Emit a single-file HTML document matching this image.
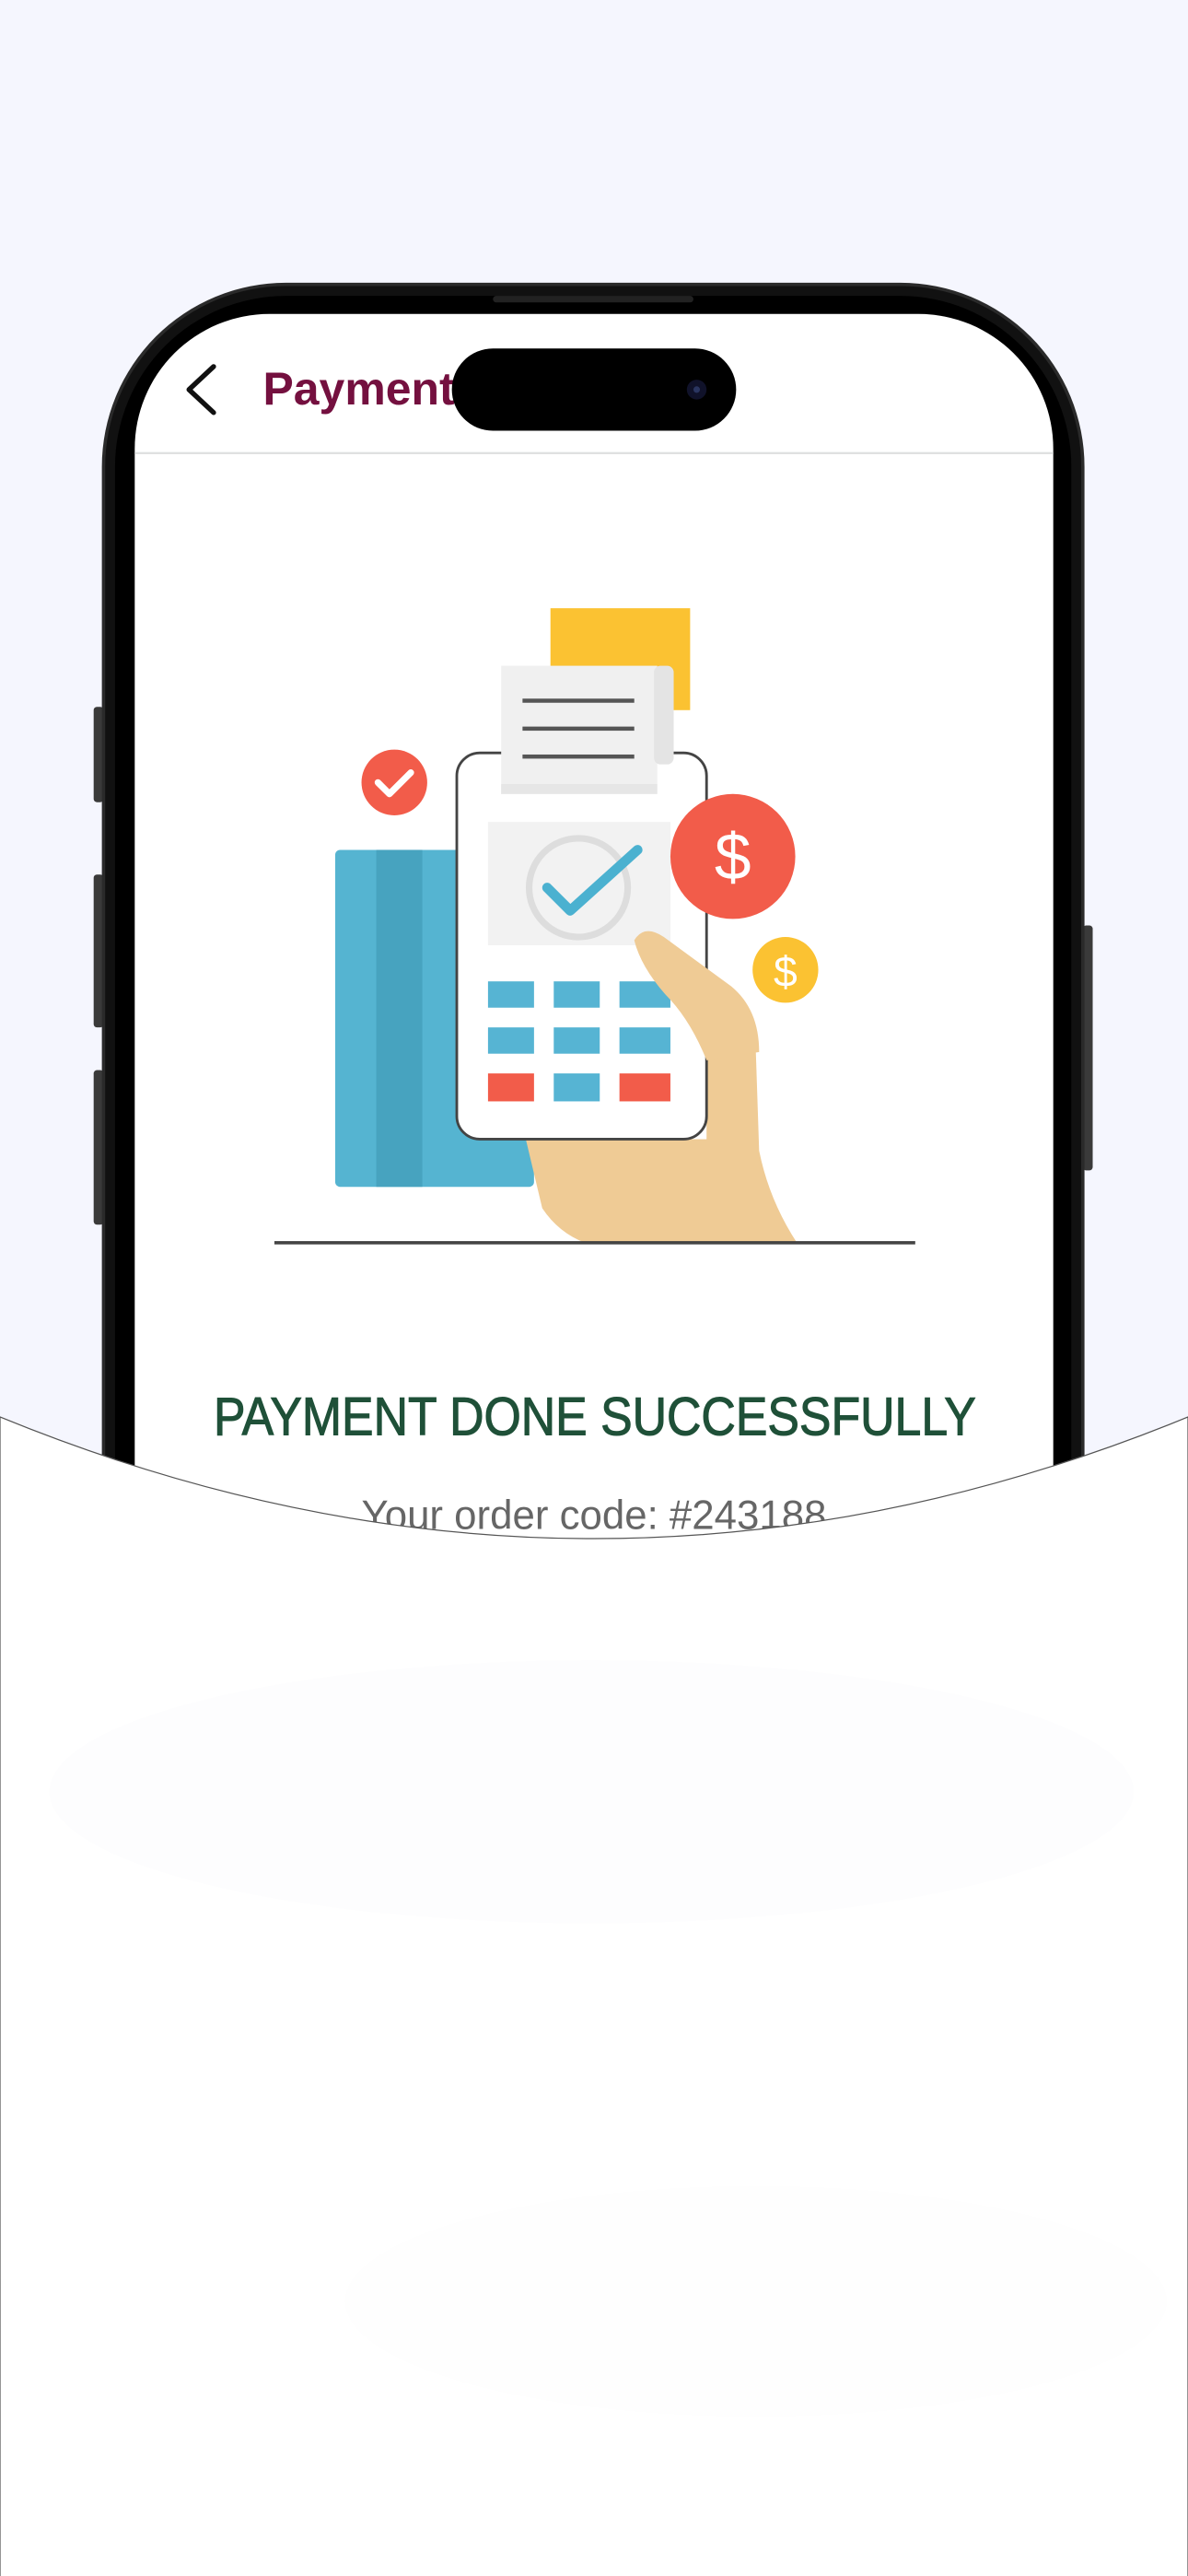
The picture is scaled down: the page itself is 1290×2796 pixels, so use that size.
<!DOCTYPE html>
<html><head><meta charset="utf-8"><style>
html,body{margin:0;padding:0;background:#f5f6fe;}
svg{display:block}
</style></head><body>
<svg width="1290" height="2796" viewBox="0 0 1290 2796" xmlns="http://www.w3.org/2000/svg">
<rect width="1290" height="2796" fill="#f5f6fe"/>
<g transform="scale(1.78423)">
  <rect x="57" y="430" width="6" height="58" rx="2" fill="#3a3a3a"/>
  <rect x="57" y="532" width="6" height="93" rx="2" fill="#3a3a3a"/>
  <rect x="57" y="651" width="6" height="94" rx="2" fill="#3a3a3a"/>
  <rect x="659" y="563" width="6" height="149" rx="2" fill="#3a3a3a"/>
  <rect x="62" y="172" width="598" height="900" rx="112" fill="#2a2a2a"/>
  <rect x="64" y="174" width="594" height="900" rx="110" fill="#111"/>
  <rect x="70" y="180" width="582" height="900" rx="104" fill="#000"/>
  <rect x="82" y="191" width="559" height="900" rx="82" fill="#fff"/>
  <rect x="300" y="180" width="122" height="4" rx="2" fill="#222"/>
  <path d="M130,223 L115,237 L130,251" fill="none" stroke="#111" stroke-width="3" stroke-linecap="round" stroke-linejoin="round"/>
  <text x="160" y="246" font-family="Liberation Sans, sans-serif" font-weight="bold" font-size="28" fill="#74103f">Payment</text>
  <rect x="275" y="212" width="173" height="50" rx="25" fill="#000"/>
  <circle cx="424" cy="237" r="6" fill="#10122a"/>
  <circle cx="424" cy="237" r="2" fill="#2a3560"/>
  <rect x="82" y="275" width="559" height="1.3" fill="#dfe1e1"/>
  <rect x="335" y="370" width="85" height="62" fill="#fbc232"/>
  <rect x="204" y="517" width="121" height="205" rx="3" fill="#55b4d1"/>
  <rect x="229" y="517" width="28" height="205" fill="#47a3bf"/>
  <circle cx="240" cy="476" r="20" fill="#f25c4a"/>
  <path d="M230,476 L237,483 L250,470" fill="none" stroke="#fff" stroke-width="4" stroke-linecap="round" stroke-linejoin="round"/>
  <path d="M320,693 L330,735 Q340,750 356,756 L485,756 Q468,730 462,700 L460,640 L430,640 L430,693 Z" fill="#efcb95"/>
  <rect x="278" y="458" width="152" height="235" rx="14" fill="#fff" stroke="#444" stroke-width="1.6"/>
  <rect x="297" y="500" width="111" height="75" fill="#f2f2f2"/>
  <circle cx="352" cy="540" r="30" fill="none" stroke="#ddd" stroke-width="4"/>
  <path d="M333,540 L347,554 L388,517" fill="none" stroke="#4bb1d0" stroke-width="6" stroke-linecap="round" stroke-linejoin="round"/>
  <rect x="305" y="405" width="95" height="78" fill="#f0f0f0"/>
  <rect x="398" y="405" width="12" height="60" rx="4" fill="#e4e4e4"/>
  <rect x="305" y="477" width="95" height="6" fill="#e6e6e6"/>
  <rect x="318" y="425" width="68" height="2.5" fill="#555"/>
  <rect x="318" y="442" width="68" height="2.5" fill="#555"/>
  <rect x="318" y="459" width="68" height="2.5" fill="#555"/>
  <g fill="#56b4d3">
    <rect x="297" y="597" width="28" height="16"/><rect x="337" y="597" width="28" height="16"/><rect x="377" y="597" width="31" height="16"/>
    <rect x="297" y="625" width="28" height="16"/><rect x="337" y="625" width="28" height="16"/><rect x="377" y="625" width="31" height="16"/>
    <rect x="337" y="653" width="28" height="17"/>
  </g>
  <rect x="297" y="653" width="28" height="17" fill="#f25c4a"/>
  <rect x="377" y="653" width="31" height="17" fill="#f25c4a"/>
  <path d="M386,572 Q392,562 404,570 L445,600 Q462,614 462,640 L430,645 Q420,620 405,605 Q390,588 386,572 Z" fill="#efcb95"/>
  <circle cx="446" cy="521" r="38" fill="#f25c4a"/>
  <text x="446" y="535" text-anchor="middle" font-family="Liberation Sans, sans-serif" font-size="40" fill="#fff">$</text>
  <circle cx="478" cy="590" r="20" fill="#fbc232"/>
  <text x="478" y="600" text-anchor="middle" font-family="Liberation Sans, sans-serif" font-size="26" fill="#fff">$</text>
  <rect x="167" y="755" width="390" height="2" fill="#444"/>
  <text x="130" y="873" textLength="464" lengthAdjust="spacingAndGlyphs" font-family="Liberation Sans, sans-serif" font-size="33" fill="#1f5038" stroke="#1f5038" stroke-width="0.6">PAYMENT DONE SUCCESSFULLY</text>
  <text x="220" y="930" textLength="283" lengthAdjust="spacingAndGlyphs" font-family="Liberation Sans, sans-serif" font-size="25" fill="#666">Your order code: #243188</text>
  <path d="M0,862 Q361.5,1010 723,862 L723,1568 L0,1568 Z" fill="#fff" stroke="#555" stroke-width="0.7"/>
  <ellipse cx="360" cy="1090" rx="330" ry="80" fill="#fdfdfe"/>
  <ellipse cx="460" cy="1400" rx="250" ry="70" fill="#fefefe"/>
</g>
</svg>
</body></html>
